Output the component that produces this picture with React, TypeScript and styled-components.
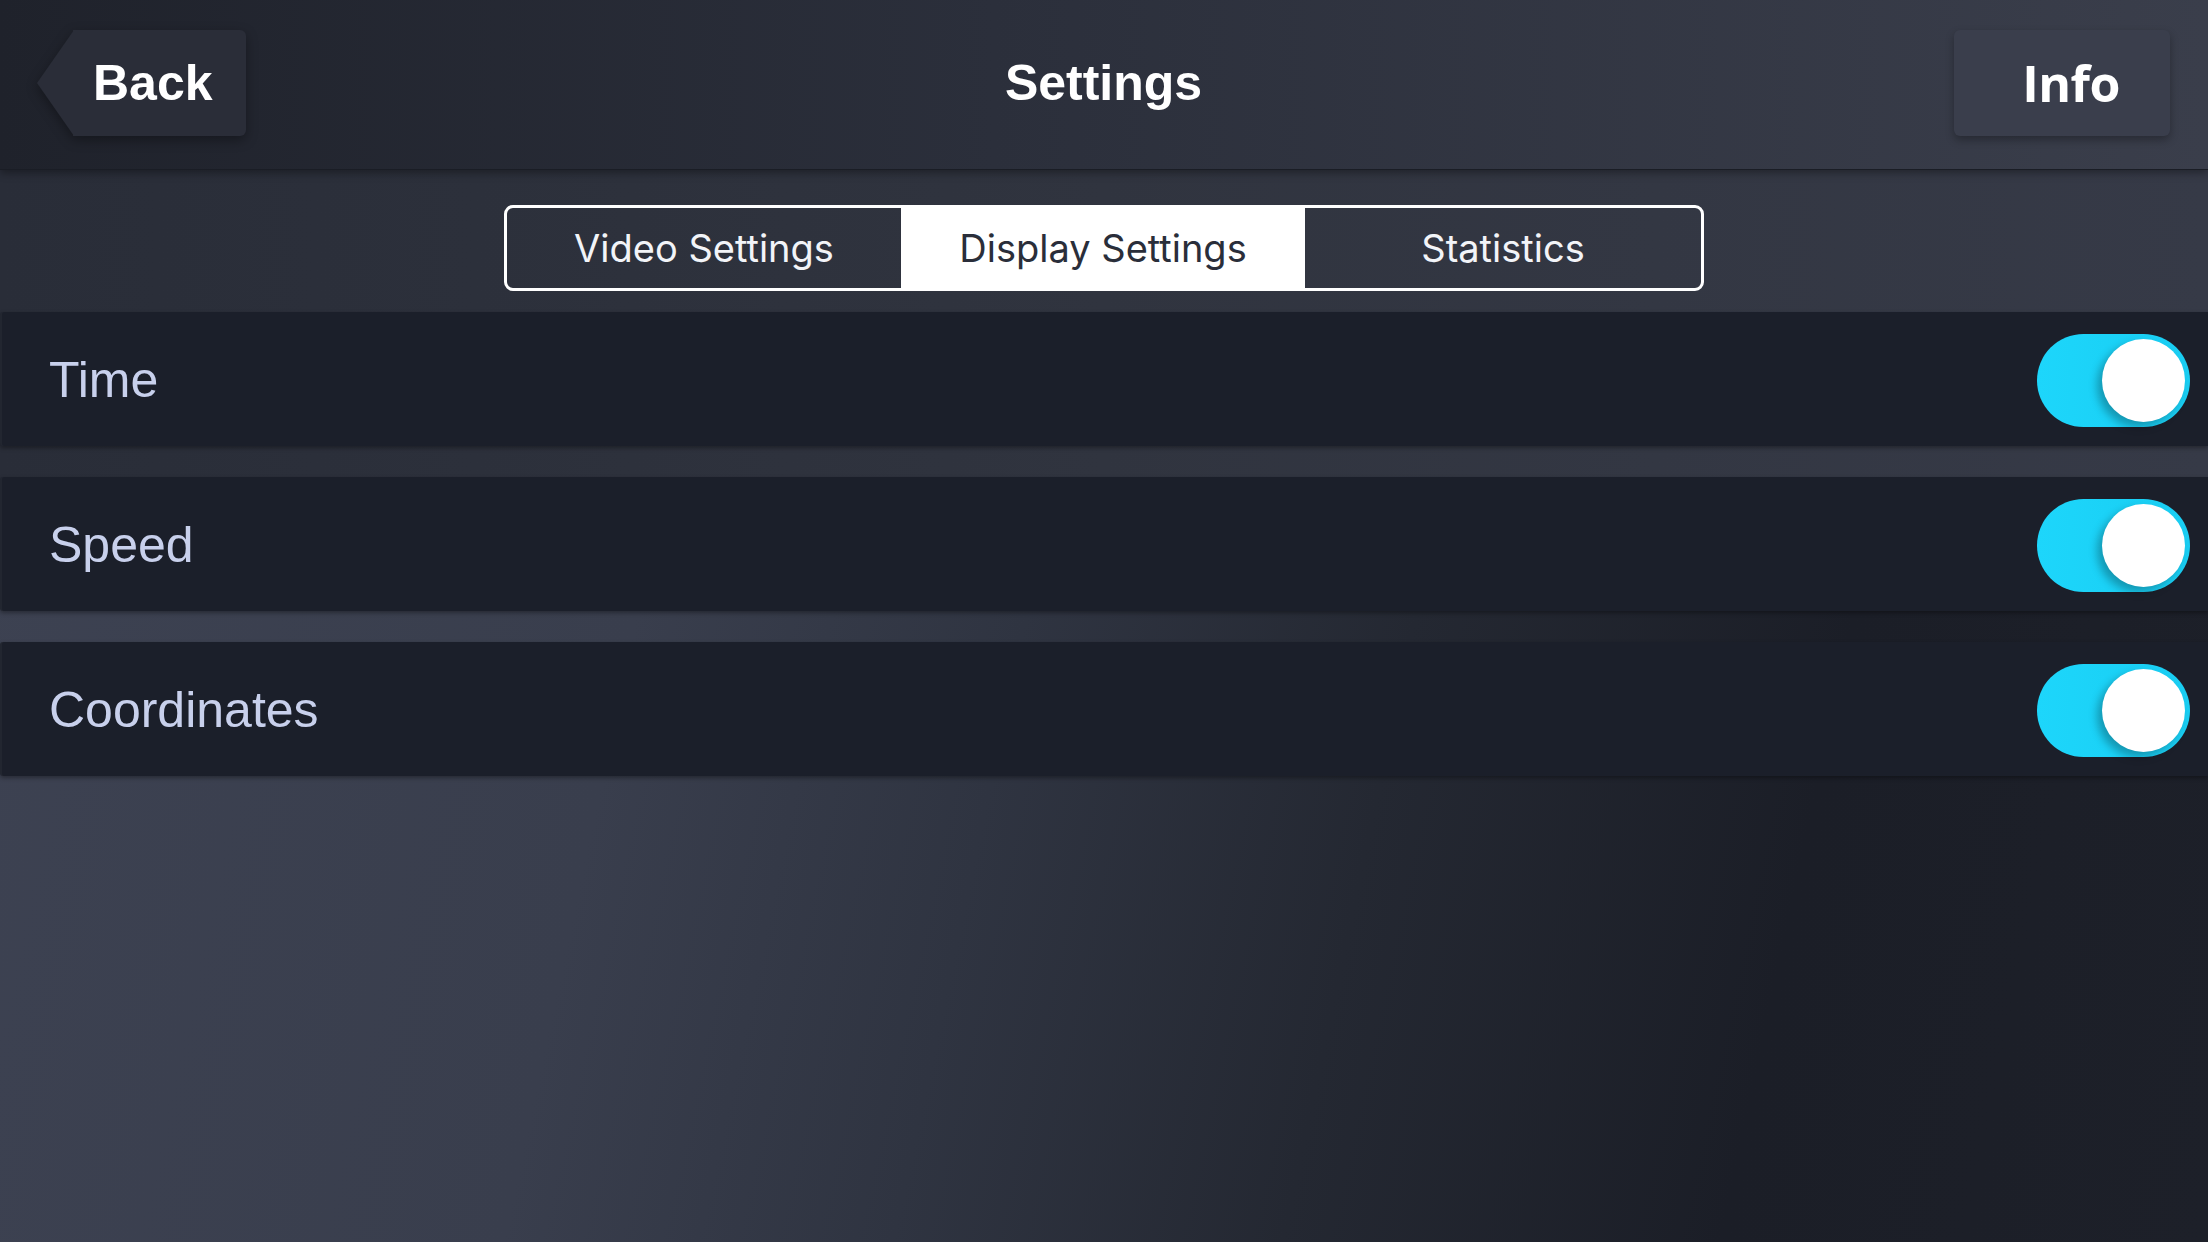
import React from "react";
import styled, { createGlobalStyle } from "styled-components";

const GlobalStyle = createGlobalStyle`
  html, body {
    margin: 0;
    padding: 0;
    height: 100%;
  }
  body {
    background: #1d2029;
    font-family: "Liberation Sans", Arial, sans-serif;
    -webkit-font-smoothing: antialiased;
  }
  * {
    box-sizing: border-box;
  }
`;

const Page = styled.div`
  display: flex;
  flex-direction: column;
  width: 100%;
  height: 100vh;
  overflow: hidden;
`;

const Header = styled.header`
  position: relative;
  z-index: 2;
  display: grid;
  grid-template-columns: 1fr auto 1fr;
  align-items: start;
  height: 170px;
  padding: 30px 38px 0 37px;
  background: linear-gradient(to right, #1f222b 0%, #2b2f3b 45%, #3a3e4b 100%);
  border-bottom: 1px solid #1a1d25;
  box-shadow: 0 3px 8px rgba(0, 0, 0, 0.35);
`;

const Title = styled.h1`
  margin: 0;
  height: 106px;
  line-height: 106px;
  font-family: "Liberation Sans", Arial, sans-serif;
  font-size: 50px;
  font-weight: 700;
  color: #ffffff;
`;

const BackWrap = styled.div`
  justify-self: start;
  filter: drop-shadow(0 4px 6px rgba(0, 0, 0, 0.35));
`;

const BackButton = styled.button`
  position: relative;
  display: flex;
  align-items: center;
  width: 173px;
  height: 106px;
  margin-left: 36px;
  padding: 0 0 0 20px;
  border: none;
  border-radius: 0 6px 6px 0;
  background: #2a2d38;
  color: #ffffff;
  font-family: "Liberation Sans", Arial, sans-serif;
  font-size: 50px;
  font-weight: 700;
  cursor: pointer;

  &::before {
    content: "";
    position: absolute;
    top: 0;
    left: -36px;
    width: 37px;
    height: 100%;
    background: #2a2d38;
    clip-path: polygon(100% 0, 100% 100%, 0 50%);
  }
`;

const InfoButton = styled.button`
  justify-self: end;
  display: flex;
  align-items: center;
  justify-content: center;
  width: 216px;
  height: 106px;
  padding: 0 0 0 18px;
  border: none;
  border-radius: 6px;
  background: #3a3e4c;
  color: #ffffff;
  font-family: "Open Sans", "Noto Sans", sans-serif;
  font-size: 50px;
  font-weight: 700;
  letter-spacing: -0.5px;
  box-shadow: 0 4px 8px rgba(0, 0, 0, 0.3);
  cursor: pointer;
`;

const Content = styled.main`
  flex: 1;
  display: flex;
  flex-direction: column;
  padding-top: 35px;
  background-color: #1d2029;
  background-image:
    linear-gradient(to right, #292d38 0%, #30343f 50%, #363a47 100%),
    linear-gradient(102deg, #3d4252 0%, #393e4d 30%, #2f3441 46%, #242832 62%, #1b1e27 80%, #1d2029 100%);
  background-size: 100% 330px, 100% 100%;
  background-repeat: no-repeat;
`;

const TabBar = styled.div`
  display: grid;
  grid-template-columns: 396fr 406fr 398fr;
  width: 1200px;
  height: 86px;
  margin: 0 auto;
  border: 3px solid #ffffff;
  border-radius: 9px;
  overflow: hidden;
`;

const Tab = styled.button<{ $active?: boolean }>`
  display: flex;
  align-items: center;
  justify-content: center;
  border: none;
  padding: 0;
  background: ${(p) => (p.$active ? "#ffffff" : "transparent")};
  color: ${(p) => (p.$active ? "#2a2e3a" : "#f2f4f8")};
  font-family: Inter, "Noto Sans", sans-serif;
  font-size: 38px;
  font-weight: 400;
  cursor: pointer;
`;

const List = styled.div`
  display: flex;
  flex-direction: column;
  gap: 31px;
  margin-top: 21px;
`;

const Row = styled.div`
  display: flex;
  align-items: center;
  justify-content: space-between;
  height: 134px;
  padding: 2px 18px 0 49px;
  background: #1b1f2a;
  border-radius: 3px 0 0 3px;
  box-shadow: 0 2px 4px rgba(0, 0, 0, 0.35), inset 2px 0 0 rgba(255, 255, 255, 0.03);
`;

const Label = styled.span`
  font-family: "Liberation Sans", Arial, sans-serif;
  font-size: 50px;
  color: #c8d0ec;
`;

const Track = styled.button<{ $on: boolean }>`
  display: flex;
  align-items: center;
  justify-content: ${(p) => (p.$on ? "flex-end" : "flex-start")};
  width: 153px;
  height: 93px;
  padding: 0 5px;
  border: none;
  border-radius: 47px;
  background: ${(p) =>
    p.$on ? "linear-gradient(to right, #1dd6fb, #19cdf2)" : "#4a4f5e"};
  cursor: pointer;
`;

const Knob = styled.span`
  width: 83px;
  height: 83px;
  border-radius: 50%;
  background: #ffffff;
  box-shadow: -5px 5px 9px rgba(0, 0, 0, 0.28);
`;

function Toggle({ on, onChange }: { on: boolean; onChange: () => void }) {
  return (
    <Track role="switch" aria-checked={on} $on={on} onClick={onChange}>
      <Knob />
    </Track>
  );
}

const tabs = ["Video Settings", "Display Settings", "Statistics"];

function App() {
  const [activeTab, setActiveTab] = React.useState(1);
  const [options, setOptions] = React.useState([
    { label: "Time", on: true },
    { label: "Speed", on: true },
    { label: "Coordinates", on: true }
  ]);

  function toggle(index: number) {
    setOptions((prev) => prev.map((o, i) => (i === index ? { ...o, on: !o.on } : o)));
  }

  return (
    <>
      <GlobalStyle />
      <Page>
        <Header>
          <BackWrap>
            <BackButton>Back</BackButton>
          </BackWrap>
          <Title>Settings</Title>
          <InfoButton>Info</InfoButton>
        </Header>
        <Content>
          <TabBar>
            {tabs.map((t, i) => (
              <Tab key={t} $active={i === activeTab} onClick={() => setActiveTab(i)}>
                {t}
              </Tab>
            ))}
          </TabBar>
          <List>
            {options.map((o, i) => (
              <Row key={o.label}>
                <Label>{o.label}</Label>
                <Toggle on={o.on} onChange={() => toggle(i)} />
              </Row>
            ))}
          </List>
        </Content>
      </Page>
    </>
  );
}

export default App;
